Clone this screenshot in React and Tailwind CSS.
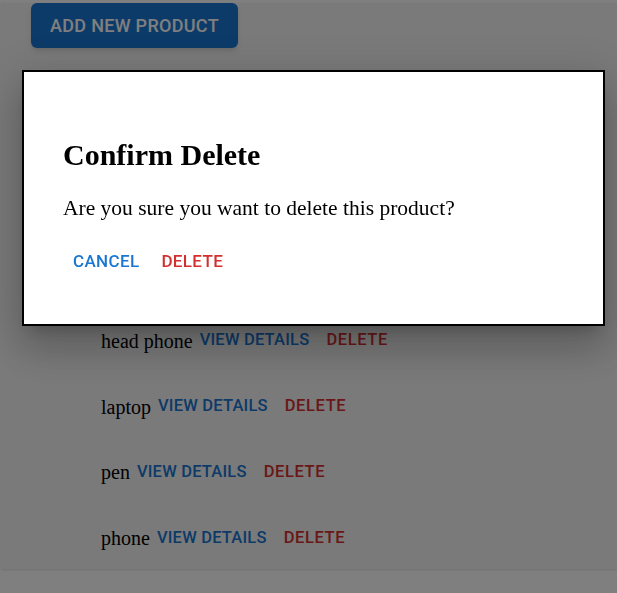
import React from 'react';

const products = ['head phone', 'laptop', 'pen', 'phone'];

const roboto = { fontFamily: 'Roboto, "Liberation Sans", sans-serif' };

const App = () => {
  return (
    <div className="min-h-[593px] bg-white pt-[3px] pl-[1px]" style={{ fontFamily: '"Liberation Serif", serif' }}>
      {/* page content */}
      <div className="h-[566px] bg-[#f4f4f4] overflow-hidden shadow-sm">
        <div className="pl-[30px]">
          <button
            className="h-[45px] w-[207px] rounded-[6px] bg-[#1976d2] text-white text-[18px] font-medium tracking-[0.3px] shadow-md"
            style={roboto}
          >
            ADD NEW PRODUCT
          </button>
        </div>
        <ul className="mt-[260px] pl-[100px]">
          {products.map((name) => (
            <li key={name} className="h-[65.7px] flex items-center text-[20px] text-black">
              <span>{name}</span>
              <button className="ml-[7px] text-[16.5px] font-medium text-[#1976d2] tracking-[0.2px]" style={roboto}>
                VIEW DETAILS
              </button>
              <button className="ml-[17px] text-[16.5px] font-medium text-[#d32f2f] tracking-[0.6px]" style={roboto}>
                DELETE
              </button>
            </li>
          ))}
        </ul>
      </div>

      {/* backdrop + dialog */}
      <div className="fixed inset-0 bg-black/50">
        <div className="absolute left-[22px] top-[70px] w-[583px] h-[256px] bg-white border-2 border-black shadow-[0_11px_15px_-7px_rgba(0,0,0,0.2),0_24px_38px_3px_rgba(0,0,0,0.14),0_9px_46px_8px_rgba(0,0,0,0.12)] px-[39px] pt-[68px]">
          <h2 className="text-[30px] font-bold leading-none text-black">Confirm Delete</h2>
          <p className="mt-[22px] text-[21.5px] text-black">Are you sure you want to delete this product?</p>
          <div className="mt-[25px] flex gap-[22px] pl-[10px]">
            <button className="text-[17px] font-medium text-[#1976d2] tracking-[0.35px]" style={roboto}>CANCEL</button>
            <button className="text-[17px] font-medium text-[#d32f2f] tracking-[0.35px]" style={roboto}>DELETE</button>
          </div>
        </div>
      </div>
    </div>
  );
};

export default App;
